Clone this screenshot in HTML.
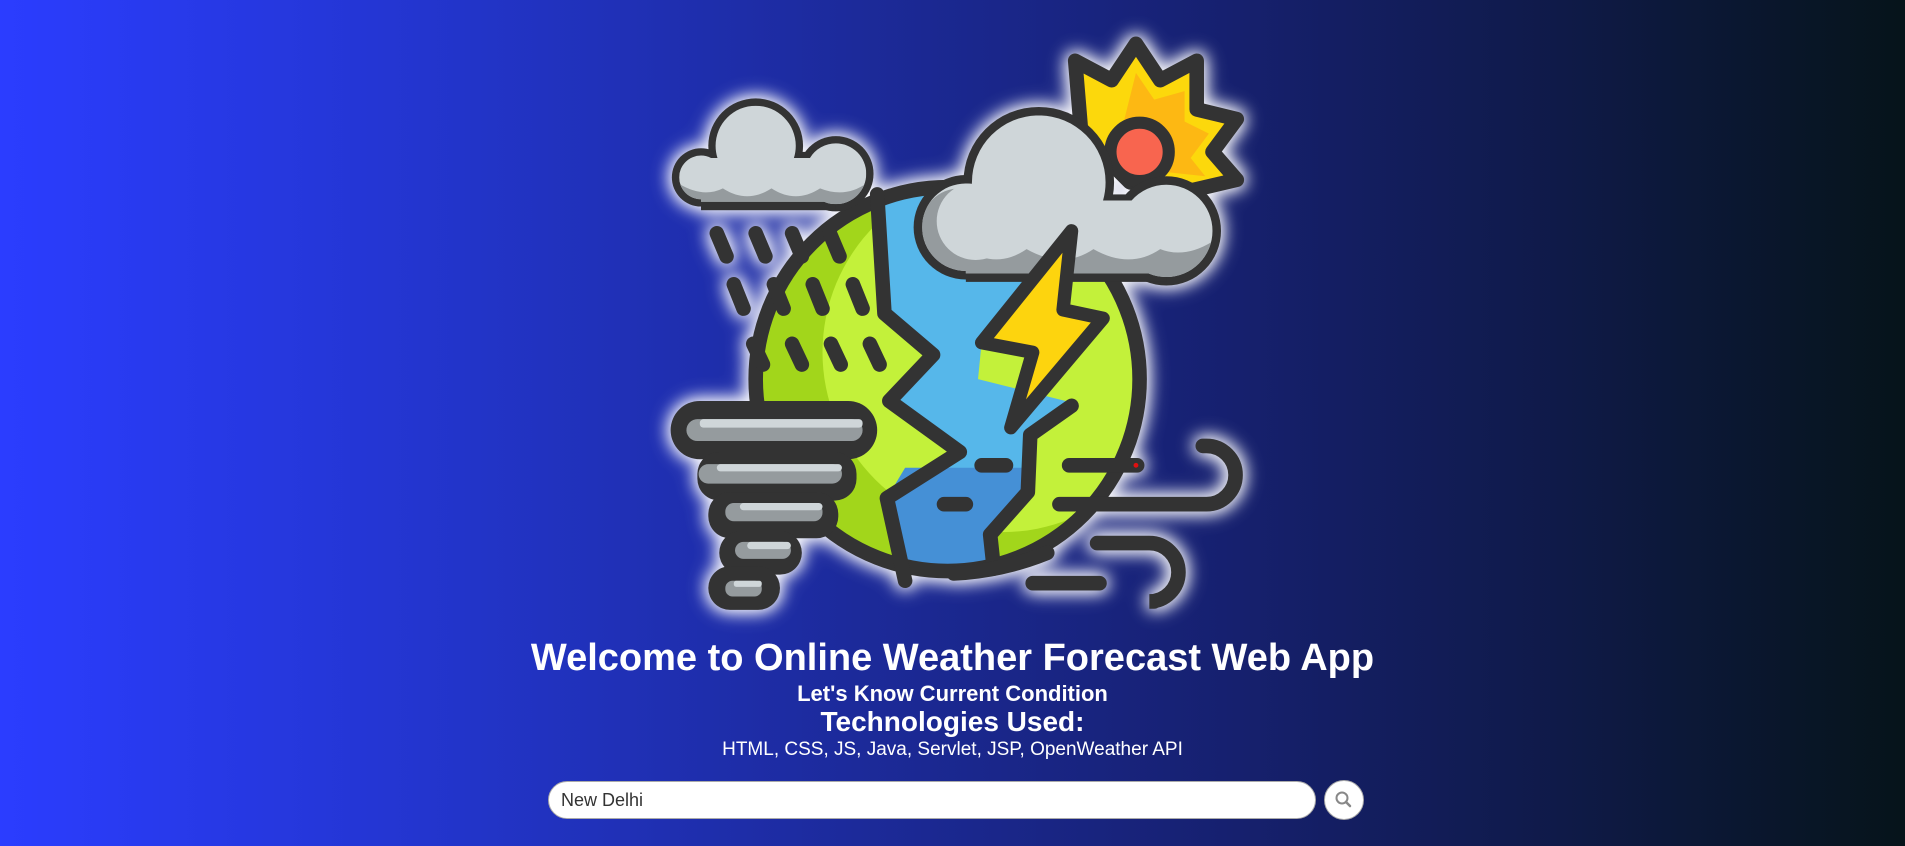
<!DOCTYPE html>
<html><head><meta charset="utf-8"><style>
html,body{margin:0;padding:0}
body{width:1905px;height:846px;overflow:hidden;position:relative;font-family:"Liberation Sans",Arial,sans-serif;
background:linear-gradient(90deg,#2b3dff 0%,#2234c8 25%,#1c2a9a 45%,#16206e 65%,#0f1a48 82%,#06141a 100%);}
.t{position:absolute;left:0;width:1905px;text-align:center;color:#fff;white-space:nowrap}
svg.art{position:absolute;left:0;top:0;filter:drop-shadow(0 0 8px #fff) drop-shadow(0 0 8px rgba(255,255,255,.7))}
.inp{position:absolute;left:548px;top:781px;width:768px;height:38px;border-radius:19px;background:#fff;border:1px solid #aaa;box-sizing:border-box;font-size:18px;color:#333;line-height:36px;padding-left:12px}
.btn{position:absolute;left:1324px;top:780px;width:40px;height:40px;border-radius:50%;background:#fff;border:1px solid #aaa;box-sizing:border-box}
</style></head><body>
<svg class="art" width="1905" height="846" viewBox="0 0 1568 696.3">
<defs><clipPath id="g"><circle cx="780" cy="312" r="158"/></clipPath>
<clipPath id="c1"><circle cx="855" cy="150" r="55"/><circle cx="795" cy="187" r="36"/><circle cx="960" cy="190" r="38"/><rect x="795" y="165" width="165" height="60"/></clipPath>
<clipPath id="c2"><circle cx="622" cy="120" r="33"/><circle cx="688" cy="143" r="25"/><circle cx="577" cy="146" r="18"/><rect x="577" y="130" width="111" height="36"/></clipPath></defs>
<!-- sun -->
<polygon points="935,36 955,66 985,50 985,90 1018,98 998,125 1018,148 975,158 930,150 890,110 885,50 915,66" fill="#fcd80c" stroke="#333" stroke-width="12" stroke-linejoin="round"/>
<polygon points="935,60 950,82 975,75 975,100 995,110 980,130 992,145 945,140 925,100" fill="#fdb813"/>
<circle cx="938" cy="125" r="24" fill="#f8654f" stroke="#333" stroke-width="10"/>
<!-- globe -->
<circle cx="780" cy="312" r="158" fill="#a2d61b"/>
<g clip-path="url(#g)"><circle cx="825" cy="290" r="148" fill="#c3f13a"/>
<polygon points="722,150 728,258 768,292 732,330 790,372 730,410 745,480 818,480 815,440 846,405 848,360 885,332 805,312 808,282 850,230 860,150" fill="#56b7ea"/>
<polygon points="745,385 730,410 745,480 818,480 815,440 846,405 848,385" fill="#4590d6"/></g>
<circle cx="780" cy="312" r="158" fill="none" stroke="#333" stroke-width="12"/>
<polyline points="722,160 728,258 768,292 732,330 790,372 730,410 745,478" fill="none" stroke="#333" stroke-width="12" stroke-linejoin="round" stroke-linecap="round"/>
<polyline points="882,334 848,358 846,405 815,440 818,468" fill="none" stroke="#333" stroke-width="12" stroke-linejoin="round" stroke-linecap="round"/>
<!-- big cloud -->
<g fill="#333"><circle cx="855" cy="150" r="62"/><circle cx="795" cy="187" r="43"/><circle cx="960" cy="190" r="45"/><rect x="795" y="160" width="165" height="72"/></g>
<g clip-path="url(#c1)"><rect x="740" y="80" width="270" height="160" fill="#cfd6d9"/><path d="M740,175 Q770,215 795,205 Q820,222 845,205 Q875,222 900,205 Q930,222 955,205 Q980,215 1010,190 L1010,240 L740,240Z" fill="#959b9e"/><circle cx="790" cy="187" r="32" fill="#959b9e"/><circle cx="803" cy="182" r="32" fill="#cfd6d9"/></g>
<!-- lightning -->
<polygon points="882,190 808,282 850,290 832,352 908,262 875,255" fill="#fdd40e" stroke="#333" stroke-width="11" stroke-linejoin="round"/>
<!-- small cloud -->
<g fill="#333"><circle cx="622" cy="120" r="39"/><circle cx="688" cy="143" r="31"/><circle cx="577" cy="146" r="24"/><rect x="577" y="125" width="111" height="48"/></g>
<g clip-path="url(#c2)"><rect x="550" y="75" width="170" height="100" fill="#cfd6d9"/><path d="M550,145 Q575,165 595,155 Q615,168 635,155 Q655,168 675,155 Q700,165 720,145 L720,175 L550,175Z" fill="#959b9e"/></g>
<!-- rain -->
<g stroke="#333" stroke-width="12" stroke-linecap="round">
<line x1="590" y1="192" x2="598" y2="211"/><line x1="622" y1="192" x2="630" y2="211"/><line x1="652" y1="192" x2="660" y2="211"/><line x1="683" y1="192" x2="691" y2="211"/>
<line x1="604" y1="234" x2="612" y2="254"/><line x1="637" y1="234" x2="645" y2="254"/><line x1="669" y1="234" x2="677" y2="254"/><line x1="702" y1="234" x2="710" y2="254"/>
<line x1="620" y1="283" x2="628" y2="300"/><line x1="652" y1="283" x2="660" y2="300"/><line x1="684" y1="283" x2="692" y2="300"/><line x1="716" y1="283" x2="724" y2="300"/>
<!-- wind -->
<line x1="808" y1="383" x2="828" y2="383"/><line x1="880" y1="383" x2="936" y2="383"/><line x1="777" y1="415" x2="795" y2="415"/>
<line x1="850" y1="480" x2="905" y2="480"/></g>
<circle cx="935" cy="383" r="2" fill="#e01010"/>
<g fill="none" stroke="#333" stroke-width="12" stroke-linecap="round">
<path d="M872,415 H993 A24,24 0 0 0 993,367 H990"/>
<path d="M903,447 H946 A24,24 0 0 1 946,495 H950"/>
<path d="M862,455 Q825,470 785,472"/></g>
<!-- tornado -->
<g fill="#333"><rect x="552" y="330" width="170" height="48" rx="24"/><rect x="574" y="372" width="131" height="40" rx="18"/><rect x="583" y="405" width="107" height="38" rx="18"/><rect x="592" y="437" width="68" height="36" rx="18"/><rect x="583" y="466" width="59" height="36" rx="18"/></g>
<g fill="#959b9e"><rect x="565" y="345" width="145" height="18" rx="9"/><rect x="575" y="382" width="118" height="16" rx="8"/><rect x="597" y="414" width="80" height="15" rx="7"/><rect x="605" y="446" width="46" height="14" rx="7"/><rect x="597" y="478" width="30" height="13" rx="6"/></g>
<g fill="#cfd6d9"><rect x="576" y="345" width="134" height="7" rx="3"/><rect x="590" y="382" width="103" height="6" rx="3"/><rect x="609" y="414" width="68" height="6" rx="3"/><rect x="615" y="446" width="36" height="6" rx="3"/><rect x="604" y="478" width="23" height="5" rx="2"/></g>
</svg>
<div class="t" style="top:636px;font-size:38px;font-weight:bold;line-height:44px">Welcome to Online Weather Forecast Web App</div>
<div class="t" style="top:681px;font-size:22px;font-weight:bold;line-height:25px">Let's Know Current Condition</div>
<div class="t" style="top:706px;font-size:28px;font-weight:bold;line-height:32px">Technologies Used:</div>
<div class="t" style="top:739px;font-size:19px;line-height:22px">HTML, CSS, JS, Java, Servlet, JSP, OpenWeather API</div>
<div class="inp">New Delhi</div>
<div class="btn"><svg width="38" height="38" viewBox="0 0 38 38"><circle cx="17" cy="17" r="5.5" fill="none" stroke="#888" stroke-width="2"/><line x1="21" y1="21" x2="25" y2="25" stroke="#888" stroke-width="2.5" stroke-linecap="round"/></svg></div>
</body></html>
